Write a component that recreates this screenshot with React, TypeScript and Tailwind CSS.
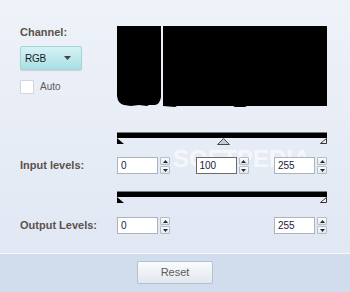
import React from 'react'

function Spinner() {
  return (
    <div className="flex h-[17px] w-[10px] flex-col gap-px">
      <div className="flex flex-1 items-center justify-center rounded-[1px] border border-[#b4bcc8] bg-gradient-to-b from-[#fbfcfd] to-[#e3e7ed]">
        <svg width="5" height="3" viewBox="0 0 5 3"><path d="M2.5 0 L5 3 H0 Z" fill="#2a2a2a" /></svg>
      </div>
      <div className="flex flex-1 items-center justify-center rounded-[1px] border border-[#b4bcc8] bg-gradient-to-b from-[#fbfcfd] to-[#e3e7ed]">
        <svg width="5" height="3" viewBox="0 0 5 3"><path d="M0 0 H5 L2.5 3 Z" fill="#2a2a2a" /></svg>
      </div>
    </div>
  )
}

function NumField({ value, focused = false }: { value: string; focused?: boolean }) {
  return (
    <div className="flex items-center gap-[2px]">
      <div
        className={
          focused
            ? 'flex h-[17px] w-[41px] items-center border border-[#6b6b6b] bg-white pl-[3px] text-[10px] text-[#1c2140]'
            : 'flex h-[17px] w-[41px] items-center border border-[#abb3be] bg-white pl-[3px] text-[10px] text-[#1c2140]'
        }
      >
        {value}
      </div>
      <Spinner />
    </div>
  )
}

function LevelBar({ mid = false }: { mid?: boolean }) {
  return (
    <div className="w-[210px]">
      <div className="h-[6px] border-t border-[#7a7a7a] bg-black" />
      <div className="relative h-[6px]">
        <svg className="absolute left-0 top-0" width="7" height="6" viewBox="0 0 7 6">
          <path d="M0 0 L7 6 H0 Z" fill="#000" />
        </svg>
        {mid && (
          <svg className="absolute left-[100px] top-0" width="13" height="7" viewBox="0 0 13 7">
            <path d="M6.5 0.5 L12.5 6.5 H0.5 Z" fill="#c9ccd1" stroke="#4a4a4a" />
          </svg>
        )}
        <svg className="absolute right-0 top-0" width="7" height="6" viewBox="0 0 7 6">
          <path d="M6.5 0.5 L6.5 5.5 H0.5 Z" fill="#f4f4f4" stroke="#333" />
        </svg>
      </div>
    </div>
  )
}

export default function App() {
  return (
    <div className="relative flex h-[292px] w-[350px] flex-col overflow-hidden bg-gradient-to-b from-[#eef2f9] to-[#dfe6f2] font-['Liberation_Sans',Arial,sans-serif]">
      <span className="pointer-events-none absolute left-[173px] top-[147px] text-[24px] font-bold leading-none text-white opacity-60">
        SOFTPEDIA
      </span>

      <div className="relative h-[253px] pt-[26px]">
        <div className="flex">
          <div className="w-[117px] pl-5">
            <p className="text-[11px] font-bold leading-[13px] text-[#5a5249]">Channel:</p>
            <button className="mt-[7px] flex h-6 w-[62px] items-center justify-between rounded-[2px] border border-[#a4d5db] bg-gradient-to-b from-[#d6f2f5] to-[#a9dfe4] pl-[4px] pr-[10px] text-[10px] tracking-tight text-[#1b1b1b] shadow-[0_1px_1px_rgba(0,0,0,0.12)]">
              RGB
              <svg width="7" height="4" viewBox="0 0 7 4"><path d="M0 0 H7 L3.5 4 Z" fill="#444" /></svg>
            </button>
            <label className="mt-[9px] flex items-center gap-[6px]">
              <span className="h-[14px] w-[14px] rounded-[1px] border border-[#cfd6e0] bg-white" />
              <span className="text-[10px] text-[#5d5a57]">Auto</span>
            </label>
          </div>
          <svg width="210" height="81" viewBox="0 0 210 81">
            <path d="M0 0 H44 V71 Q43 78 38 79 L32 79 L30 80 L22 79 L14 80 L7 79 Q1 78 0 70 Z" fill="#000" />
            <path d="M46 0 H210 V80 L130 80 L128 81 L118 81 L116 80 L60 80 L58 81 L46 80 Z" fill="#000" />
          </svg>
        </div>

        <div className="mt-[25px] flex">
          <div className="w-[117px]" />
          <LevelBar mid />
        </div>

        <div className="mt-[13px] flex items-center">
          <p className="w-[117px] pl-5 text-[11px] font-bold text-[#5a5249]">Input levels:</p>
          <div className="flex w-[210px] justify-between">
            <NumField value="0" />
            <NumField value="100" focused />
            <NumField value="255" />
          </div>
        </div>

        <div className="mt-[17px] flex">
          <div className="w-[117px]" />
          <LevelBar />
        </div>

        <div className="mt-[14px] flex items-center">
          <p className="w-[117px] pl-5 text-[11px] font-bold text-[#5a5249]">Output Levels:</p>
          <div className="flex w-[210px] justify-between">
            <NumField value="0" />
            <NumField value="255" />
          </div>
        </div>
      </div>

      <div className="relative flex flex-1 justify-center border-t border-[#f3f6fb] bg-[#d1ddec] pt-[7px]">
        <button className="h-[23px] w-[76px] rounded-[2px] border border-[#b3c0d1] bg-gradient-to-b from-[#fbfcfd] via-[#eef1f5] to-[#e2e7ee] text-[11px] text-[#5a5a5a]">
          Reset
        </button>
      </div>
    </div>
  )
}
